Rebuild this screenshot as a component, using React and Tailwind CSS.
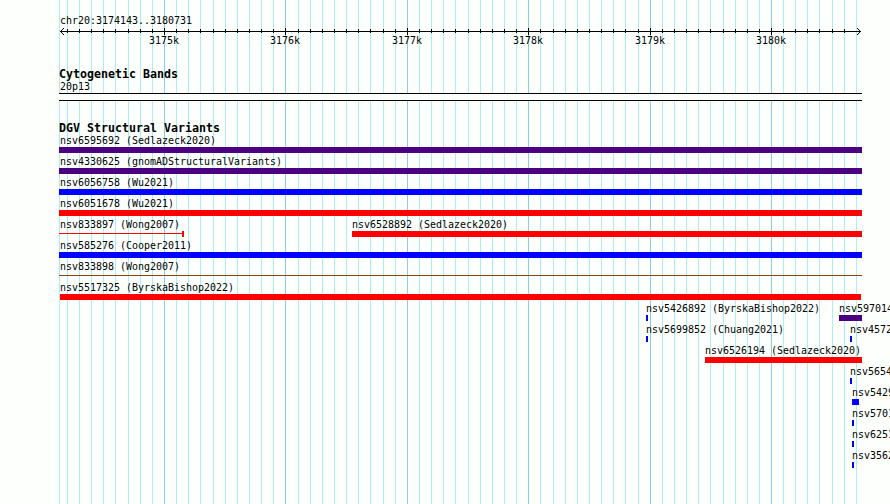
const WIDTH = 890
const HEIGHT = 504
const LEFT = 59

const MAJOR_TICKS = [
  { x: 164, label: '3175k' },
  { x: 285, label: '3176k' },
  { x: 407, label: '3177k' },
  { x: 528, label: '3178k' },
  { x: 650, label: '3179k' },
  { x: 771, label: '3180k' },
]

const MINOR_TICKS = [
  67, 79, 91, 103, 115, 128, 140, 152, 176, 188, 200, 213, 225, 237, 249, 261, 273,
  298, 310, 322, 334, 346, 358, 370, 383, 395, 419, 431, 443, 455, 468, 480, 492, 504, 516,
  540, 553, 565, 577, 589, 601, 613, 625, 638, 662, 674, 686, 698, 710, 723, 735, 747, 759,
  783, 795, 807, 819, 832, 844, 856,
]

// start / end are pixel offsets on the track, labelX defaults to start + 1
const ROWS = [
  [{ name: 'nsv6595692 (Sedlazeck2020)', start: 59, end: 862, color: 'bg-[#4b0082]' }],
  [{ name: 'nsv4330625 (gnomADStructuralVariants)', start: 59, end: 862, color: 'bg-[#4b0082]' }],
  [{ name: 'nsv6056758 (Wu2021)', start: 59, end: 862, color: 'bg-[#0000ff]' }],
  [{ name: 'nsv6051678 (Wu2021)', start: 59, end: 862, color: 'bg-[#ff0000]' }],
  [
    { name: 'nsv833897 (Wong2007)', start: 59, end: 184, color: 'bg-[#ff0000]', kind: 'capped' },
    { name: 'nsv6528892 (Sedlazeck2020)', start: 352, end: 862, labelX: 352, color: 'bg-[#ff0000]' },
  ],
  [{ name: 'nsv585276 (Cooper2011)', start: 59, end: 862, color: 'bg-[#0000ff]' }],
  [{ name: 'nsv833898 (Wong2007)', start: 59, end: 862, color: 'bg-[#8b4513]', kind: 'line' }],
  [{ name: 'nsv5517325 (ByrskaBishop2022)', start: 60, end: 861, labelX: 60, color: 'bg-[#ff0000]' }],
  [
    { name: 'nsv5426892 (ByrskaBishop2022)', start: 646, end: 648, labelX: 646, color: 'bg-[#0000ff]' },
    { name: 'nsv597014', start: 839, end: 862, labelX: 839, color: 'bg-[#4b0082]' },
  ],
  [
    { name: 'nsv5699852 (Chuang2021)', start: 646, end: 648, labelX: 646, color: 'bg-[#0000ff]' },
    { name: 'nsv4572', start: 850, end: 852, labelX: 850, color: 'bg-[#0000ff]' },
  ],
  [{ name: 'nsv6526194 (Sedlazeck2020)', start: 705, end: 862, labelX: 705, color: 'bg-[#ff0000]' }],
  [{ name: 'nsv5654', start: 850, end: 852, labelX: 850, color: 'bg-[#0000ff]' }],
  [{ name: 'nsv5429', start: 852, end: 859, labelX: 852, color: 'bg-[#0000ff]' }],
  [{ name: 'nsv5701', start: 852, end: 854, labelX: 852, color: 'bg-[#0000ff]' }],
  [{ name: 'nsv6251', start: 852, end: 854, labelX: 852, color: 'bg-[#0000ff]' }],
  [{ name: 'nsv3562', start: 852, end: 854, labelX: 852, color: 'bg-[#0000ff]' }],
]

function Gridlines() {
  return (
    <svg className="absolute inset-0" width={WIDTH} height={HEIGHT} shapeRendering="crispEdges">
      <rect x={LEFT} y={0} width={1} height={HEIGHT} fill="#afeeee" />
      {MINOR_TICKS.map((x) => (
        <rect key={x} x={x} y={0} width={1} height={HEIGHT} fill="#afeeee" />
      ))}
      {MAJOR_TICKS.map(({ x }) => (
        <rect key={x} x={x} y={0} width={1} height={HEIGHT} fill="#87ceeb" />
      ))}
    </svg>
  )
}

function Ruler() {
  return (
    <svg className="block" width={WIDTH} height={22} shapeRendering="crispEdges">
      <rect x={60} y={4} width={801} height={1} />
      {MINOR_TICKS.filter((x) => x < 850).map((x) => (
        <rect key={x} x={x} y={2} width={1} height={4} />
      ))}
      {MAJOR_TICKS.map(({ x }) => (
        <rect key={x} x={x} y={1} width={1} height={7} />
      ))}
      {[1, 2, 3].map((d) => (
        <g key={d}>
          <rect x={60 + d} y={4 - d} width={1} height={1} />
          <rect x={60 + d} y={4 + d} width={1} height={1} />
          <rect x={860 - d} y={4 - d} width={1} height={1} />
          <rect x={860 - d} y={4 + d} width={1} height={1} />
        </g>
      ))}
      {MAJOR_TICKS.map(({ x, label }) => (
        <text key={label} x={x - 15} y={17} fontSize="9.97">
          {label}
        </text>
      ))}
    </svg>
  )
}

function Glyph({ color, kind }) {
  if (kind === 'line') return <div className={`mt-0.5 h-px ${color}`} />
  if (kind === 'capped') {
    return (
      <div className="flex h-1.5 items-center">
        <div className={`mb-px h-px flex-1 ${color}`} />
        <div className={`h-full w-0.5 ${color}`} />
      </div>
    )
  }
  return <div className={`h-1.5 ${color}`} />
}

function Feature({ name, start, end, labelX = start + 1, color, kind }) {
  return (
    <div className="col-start-1 row-start-1 flow-root" style={{ marginLeft: start }}>
      <div className="h-[13px] whitespace-nowrap leading-[13px]" style={{ paddingLeft: labelX - start }}>
        {name}
      </div>
      <div className="flow-root" style={{ width: end - start }}>
        <Glyph color={color} kind={kind} />
      </div>
    </div>
  )
}

export default function App() {
  return (
    <div className="relative h-[504px] w-[890px] overflow-hidden bg-[#fdfffc] font-['DejaVu_Sans_Mono',monospace] text-[9.97px] text-black">
      <Gridlines />
      <div className="relative flex flex-col">
        <div className="mt-[15px] h-3 pl-[60px] leading-3">chr20:3174143..3180731</div>
        <Ruler />

        <section className="mt-[18px]">
          <h2 className="h-[14px] pl-[59px] text-[11.63px] font-bold leading-[14px]">Cytogenetic Bands</h2>
          <div className="h-3 pl-[60px] leading-3">20p13</div>
          <div className="ml-[59px] h-2 w-[803px] border-y border-black bg-[#fdfffc]" />
        </section>

        <section className="mt-5">
          <h2 className="h-[13px] pl-[59px] text-[11.63px] font-bold leading-[14px]">DGV Structural Variants</h2>
          {ROWS.map((row) => (
            <div key={row[0].name} className="grid h-[21px] grid-cols-[890px]">
              {row.map((feature) => (
                <Feature key={feature.name} {...feature} />
              ))}
            </div>
          ))}
        </section>
      </div>
    </div>
  )
}
